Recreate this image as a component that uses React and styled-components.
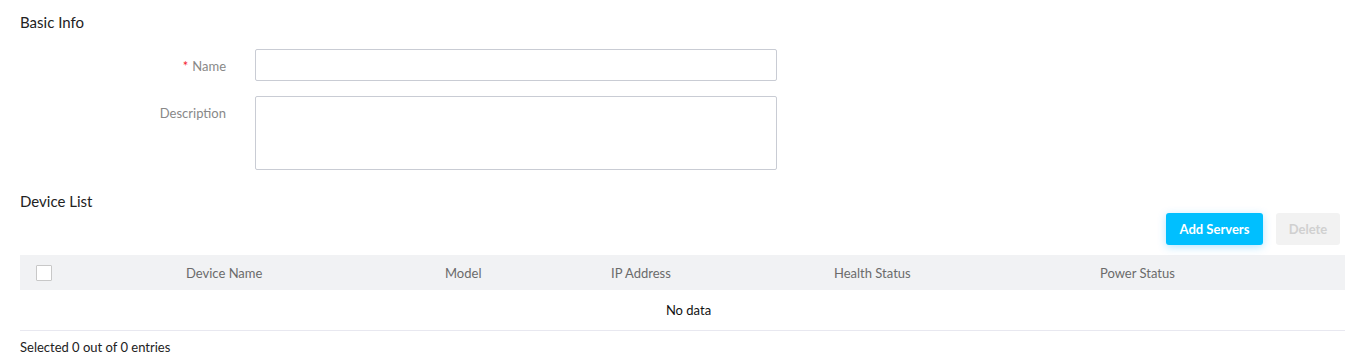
import React from "react";
import styled, { createGlobalStyle } from "styled-components";

const GlobalStyle = createGlobalStyle`
  html, body {
    margin: 0;
    padding: 0;
    background: #fff;
    font-family: Lato, "Noto Sans", "Liberation Sans", sans-serif;
    color: #333;
  }
`;

const Page = styled.div`
  padding: 12px 12px 0 20px;
  width: 1357px;
  box-sizing: border-box;
`;

const SectionTitle = styled.h3`
  margin: 0;
  font-size: 15px;
  font-weight: 400;
  color: #222;
  line-height: 20px;
`;

const Form = styled.div`
  display: flex;
  flex-direction: column;
  gap: 15px;
  padding-top: 17px;
`;

const FormRow = styled.div`
  display: grid;
  grid-template-columns: 206px 522px;
  column-gap: 29px;
  align-items: start;
`;

const Label = styled.label`
  text-align: right;
  font-size: 13px;
  color: #888;
  height: 32px;
  line-height: 34px;
  ${(p) => p.$top && "height: auto; line-height: 20px; padding-top: 7px;"}
`;

const Required = styled.span`
  color: #f5222d;
  margin-right: 4px;
`;

const Input = styled.input`
  height: 32px;
  box-sizing: border-box;
  border: 1px solid #c9ccd4;
  border-radius: 2px;
  outline: none;
  padding: 0 8px;
`;

const TextArea = styled.textarea`
  height: 74px;
  box-sizing: border-box;
  border: 1px solid #c9ccd4;
  border-radius: 2px;
  outline: none;
  resize: none;
  padding: 6px 8px;
`;

const ListHeader = styled.div`
  padding-top: 21px;
`;

const Toolbar = styled.div`
  display: flex;
  justify-content: flex-end;
  gap: 13px;
  padding-right: 5px;
  margin-top: 2px;
`;

const Button = styled.button`
  height: 32px;
  border: none;
  border-radius: 3px;
  font-family: inherit;
  font-size: 13px;
  font-weight: 700;
  padding: 0;
  width: ${(p) => (p.$primary ? "97px" : "64px")};
  background: ${(p) => (p.$primary ? "#00bfff" : "#f2f2f2")};
  color: ${(p) => (p.$primary ? "#fff" : "#d0d0d0")};
  box-shadow: ${(p) => (p.$primary ? "0 2px 8px rgba(0, 170, 255, 0.3)" : "none")};
`;

const Table = styled.div`
  margin-top: 10px;
`;

const HeadRow = styled.div`
  display: grid;
  grid-template-columns: 150px 259px 166px 223px 266px 1fr;
  height: 35px;
  align-items: center;
  background: #f1f2f4;
`;

const HeadCell = styled.div`
  padding-left: 16px;
  font-size: 13px;
  color: #6b6b6b;
`;

const Checkbox = styled.span`
  display: block;
  width: 16px;
  height: 16px;
  box-sizing: border-box;
  border: 1px solid #c8c8c8;
  background: #fff;
  border-radius: 1px;
`;

const Empty = styled.div`
  height: 40px;
  display: flex;
  align-items: center;
  justify-content: center;
  padding-left: 12px;
  font-size: 13px;
  color: #111;
  border-bottom: 1px solid #e8e8f0;
`;

const Footer = styled.div`
  font-size: 13px;
  color: #222;
  padding-top: 8px;
`;

const columns = ["Device Name", "Model", "IP Address", "Health Status", "Power Status"];

export default function App() {
  return (
    <Page>
      <GlobalStyle />
      <SectionTitle>Basic Info</SectionTitle>
      <Form>
        <FormRow>
          <Label>
            <Required>*</Required>Name
          </Label>
          <Input />
        </FormRow>
        <FormRow>
          <Label $top>Description</Label>
          <TextArea />
        </FormRow>
      </Form>
      <ListHeader>
        <SectionTitle>Device List</SectionTitle>
      </ListHeader>
      <Toolbar>
        <Button $primary>Add Servers</Button>
        <Button>Delete</Button>
      </Toolbar>
      <Table>
        <HeadRow>
          <HeadCell>
            <Checkbox />
          </HeadCell>
          {columns.map((c) => (
            <HeadCell key={c}>{c}</HeadCell>
          ))}
        </HeadRow>
        <Empty>No data</Empty>
      </Table>
      <Footer>Selected 0 out of 0 entries</Footer>
    </Page>
  );
}
